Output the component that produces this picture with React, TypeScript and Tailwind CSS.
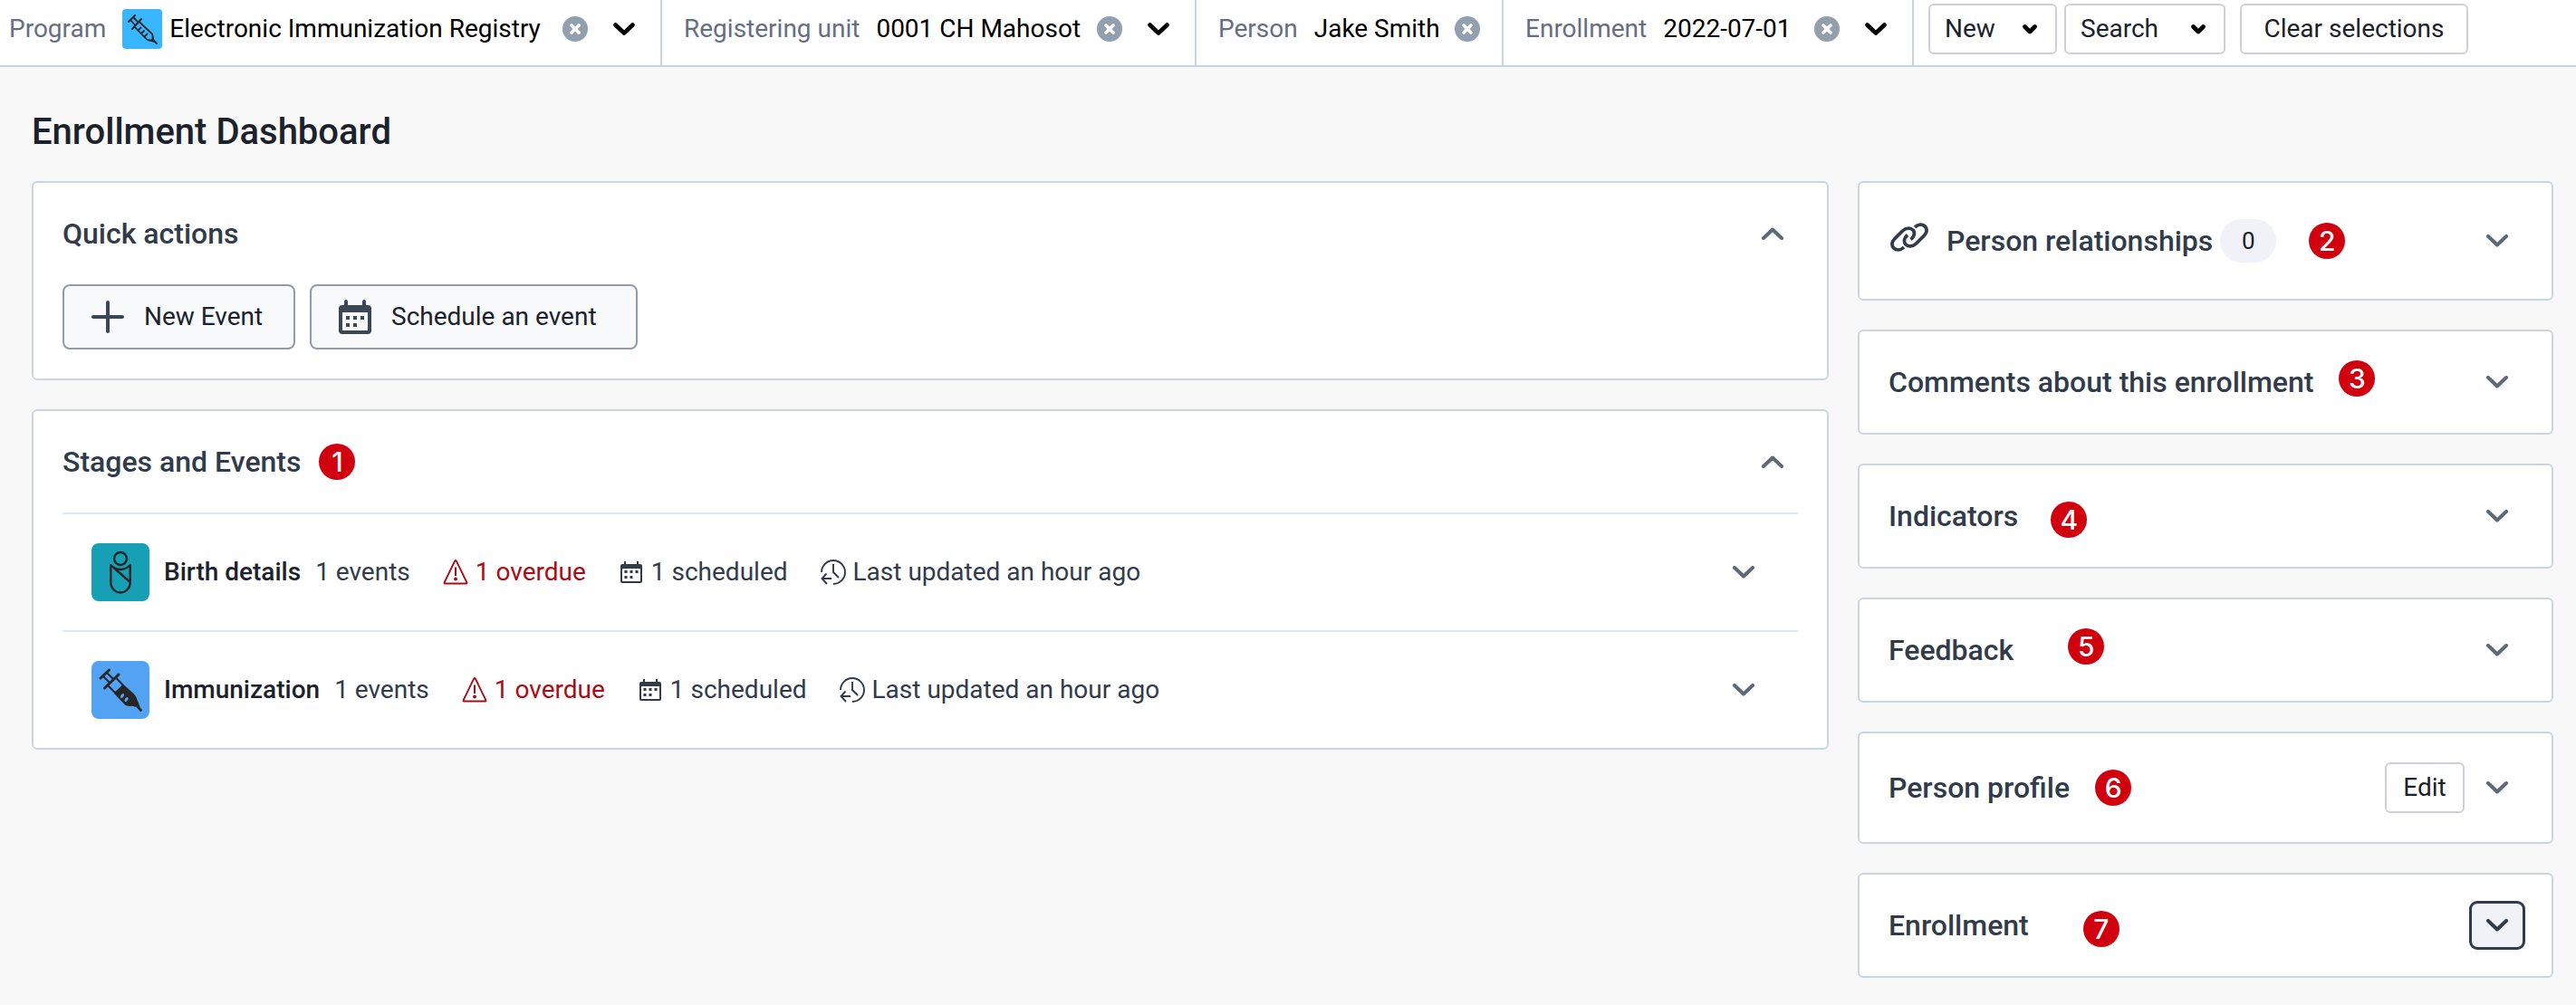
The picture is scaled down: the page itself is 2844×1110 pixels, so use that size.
import type { ReactNode } from "react";

type ChevronProps = { up?: boolean; className?: string };

function Chevron({ up = false, className = "" }: ChevronProps) {
  return (
    <svg viewBox="0 0 24 14" className={`h-[14px] w-6 ${className}`} fill="none" stroke="currentColor" strokeWidth="4" strokeLinecap="round" strokeLinejoin="round" aria-hidden="true">
      <path d={up ? "M2 12 L12 2.5 L22 12" : "M2 2 L12 11.5 L22 2"} />
    </svg>
  );
}

function BoldChevron() {
  return (
    <svg viewBox="0 0 24 14" className="h-[14px] w-6" fill="none" stroke="currentColor" strokeWidth="4.6" strokeLinecap="round" strokeLinejoin="round" aria-hidden="true">
      <path d="M2.5 2.5 L12 11.5 L21.5 2.5" />
    </svg>
  );
}

function SmallChevron() {
  return (
    <svg viewBox="0 0 16 11" className="h-[11px] w-4" fill="none" stroke="#000" strokeWidth="4.6" strokeLinecap="round" strokeLinejoin="round" aria-hidden="true">
      <path d="M2.5 2.5 L8 8 L13.5 2.5" />
    </svg>
  );
}

function SyringeOutline() {
  return (
    <svg viewBox="0 0 44 44" className="size-11 rounded bg-[#38b6ff]" fill="none" stroke="#26282b" strokeWidth="1.8" strokeLinecap="round" strokeLinejoin="round" aria-hidden="true">
      <path d="M7 14 L14 7" strokeWidth="2" />
      <path d="M9 12 L13.5 17 M12 9 L17 14" />
      <path d="M11 22 L21 11" strokeWidth="2" />
      <path d="M13.5 19.5 L27 33.5 Q31 35.5 33 34 Q34.500 31.500 33 27.500 L18.500 14" />
      <path d="M17.500 23.500 L20.500 20.500 M21 27 L24 24 M24.500 30.500 L27.500 27.500" />
      <path d="M30 34.500 L35 36 L33.500 31" />
      <path d="M35 35 L38 38" strokeWidth="2.200" />
    </svg>
  );
}

function SyringeFilled() {
  return (
    <svg viewBox="0 0 64 64" className="size-16 rounded-lg bg-[#52a3f3]" fill="none" stroke="#262626" strokeWidth="2" strokeLinecap="round" strokeLinejoin="round" aria-hidden="true">
      <path d="M10 19 L19.500 10" strokeWidth="3" />
      <path d="M13 17 L20 24 M17 13 L24 20" />
      <path d="M14.500 30 L30 15" strokeWidth="3" />
      <path d="M18.500 27.500 L27 36 M27.500 19 L35 27" />
      <path d="M26 35.500 L35 27 L46 37 Q50 41 49.500 47 Q44 50.500 38 48 Z" fill="#262626" />
      <path d="M46 49 L52.500 50.500 L50 44 Z" fill="#262626" />
      <path d="M51 50.500 L54.500 54.500" strokeWidth="2.800" />
      <ellipse cx="34" cy="38.500" rx="1.600" ry="2.800" transform="rotate(38 34 38.500)" fill="#52a3f3" stroke="none" />
      <ellipse cx="38.500" cy="42.500" rx="1.600" ry="2.800" transform="rotate(38 38.500 42.500)" fill="#52a3f3" stroke="none" />
    </svg>
  );
}

function SwaddledBaby() {
  return (
    <svg viewBox="0 0 64 64" className="size-16 rounded-lg bg-[#169fb5]" fill="none" stroke="#262626" strokeWidth="2.400" strokeLinejoin="round" aria-hidden="true">
      <circle cx="32" cy="17" r="7" />
      <path d="M21.300 24 V43.500 A10.700 11 0 0 0 42.700 43.500 V24 Q38 29 32 29 Q26 29 21.300 24 Z M24 26.500 L42.700 43" />
    </svg>
  );
}

function LinkIcon() {
  return (
    <svg viewBox="0 0 42 32" className="h-8 w-[42px]" fill="none" stroke="#303b4b" strokeWidth="3.800" aria-hidden="true">
      <path d="M15 27 C11 31 6.500 30.500 3.800 28 C1 25.500 1.500 21 4.500 18 L13.500 9 C17.500 5 22.500 5.500 25 8 C27.500 11 26.500 15.500 22.500 18.500" />
      <path d="M27 5 C31 1 35.500 1.500 38.200 4 C41 6.500 40.500 11 37.500 14 L28.500 23 C24.500 27 19.500 26.500 17 24 C14.500 21 15 17 19 13.500" />
    </svg>
  );
}

function PlusIcon() {
  return (
    <svg viewBox="0 0 36 36" className="size-9" stroke="#3b4657" strokeWidth="4" strokeLinecap="round" aria-hidden="true">
      <path d="M18 2 V34 M2 18 H34" />
    </svg>
  );
}

function ScheduleIcon() {
  return (
    <svg viewBox="0 0 36 38" className="h-[38px] w-9" fill="#3b4657" aria-hidden="true">
      <path fillRule="evenodd" d="M6 2 a2 2 0 0 1 4 0 V6 H26 V2 a2 2 0 0 1 4 0 V6 H32 a4 4 0 0 1 4 4 V34 a4 4 0 0 1 -4 4 H4 a4 4 0 0 1 -4 -4 V10 a4 4 0 0 1 4 -4 H6 Z M4 14 V34 H32 V14 Z" />
      <path d="M8 18 h4 v4 h-4 z M16 18 h4 v4 h-4 z M24 18 h4 v4 h-4 z M8 26 h4 v4 h-4 z M16 26 h4 v4 h-4 z" />
    </svg>
  );
}

function WarningIcon() {
  return (
    <svg viewBox="0 0 28 28" className="size-7" fill="none" stroke="currentColor" strokeWidth="1.800" strokeLinejoin="round" aria-hidden="true">
      <path d="M13.200 1.500 Q14 0.500 14.800 1.500 L26.500 25.500 Q26.600 26.500 25.500 26.500 H2.500 Q1.400 26.500 1.500 25.500 Z" />
      <path d="M14 8.500 V18" strokeWidth="2" />
      <circle cx="14" cy="21.500" r="2" fill="currentColor" stroke="none" />
    </svg>
  );
}

function CalendarIcon() {
  return (
    <svg viewBox="0 0 28 28" className="size-7" fill="currentColor" aria-hidden="true">
      <path fillRule="evenodd" d="M6 2 h2 V5 H20 V2 h2 V5 H24 a2 2 0 0 1 2 2 V24 a2 2 0 0 1 -2 2 H4 a2 2 0 0 1 -2 -2 V7 a2 2 0 0 1 2 -2 H6 Z M4 10 V24 H24 V10 Z" />
      <path d="M6.500 12 h3 v3 h-3 z M12.500 12 h3 v3 h-3 z M18.500 12 h3 v3 h-3 z M6.500 18 h3 v3 h-3 z M12.500 18 h3 v3 h-3 z" />
    </svg>
  );
}

function HistoryIcon() {
  return (
    <svg viewBox="0 0 28 28" className="size-7" fill="none" stroke="currentColor" strokeWidth="1.900" aria-hidden="true">
      <path d="M1 14 A13 13 0 1 1 14 27" />
      <path d="M14 5 V14 L20 20" />
      <path d="M12 21 H2 M6.500 15.500 L1.500 21 L7 27" />
    </svg>
  );
}

function ClearButton({ label }: { label: string }) {
  return (
    <button type="button" aria-label={`Clear ${label}`} className="flex size-7 items-center justify-center rounded-full bg-[#929fae]">
      <svg viewBox="0 0 12 12" className="size-3" stroke="#fff" strokeWidth="3.800" strokeLinecap="round" aria-hidden="true">
        <path d="M2 2 L10 10 M10 2 L2 10" />
      </svg>
    </button>
  );
}

type SelectorProps = { label: string; value: string; icon?: ReactNode; menu?: boolean; className: string };

function Selector({ label, value, icon, menu = true, className }: SelectorProps) {
  return (
    <div className={`flex items-center border-r-2 border-[#c9d5e1] pt-1 pb-3 ${menu ? "pr-7" : "pr-6"} ${className}`}>
      <span className="mr-[18px] text-[#646f83]">{label}</span>
      {icon && <span className="mr-2">{icon}</span>}
      <span className="mr-4 flex-1 text-black">{value}</span>
      <ClearButton label={label} />
      {menu && (
        <button type="button" aria-label={`Change ${label}`} className="ml-7 text-black">
          <BoldChevron />
        </button>
      )}
    </div>
  );
}

function Marker({ n, className }: { n: number; className: string }) {
  return (
    <span className={`flex h-12 ${className}`}>
      <span className="flex size-10 items-center justify-center rounded-full bg-[#d1000e] font-['Inter',sans-serif] text-[30px] leading-none font-medium text-white">
        {n}
      </span>
    </span>
  );
}

function ToggleButton({ label, up = false, focused = false }: { label: string; up?: boolean; focused?: boolean }) {
  return (
    <button
      type="button"
      aria-label={`Toggle ${label}`}
      aria-expanded={up}
      className={`flex h-12 w-14 items-center justify-center rounded-md ${focused ? "bg-[#f0f2f7] text-[#303b4b] outline-3 outline-[#303b4b]" : "text-[#5d687b]"}`}
    >
      <Chevron up={up} />
    </button>
  );
}

function Card({ children }: { children: ReactNode }) {
  return <section className="rounded-md border-2 border-[#cad5e0] bg-white">{children}</section>;
}

type HeaderProps = { title: string; marker?: ReactNode; before?: ReactNode; after?: ReactNode; action?: ReactNode; up?: boolean; focused?: boolean; tall?: boolean };

function CardHeader({ title, marker, before, after, action, up, focused, tall = false }: HeaderProps) {
  return (
    <div className={`flex items-center px-8 ${tall ? "py-10" : "py-8"}`}>
      {before}
      <h2 className="text-[32px] leading-10 font-medium text-[#303b4b]">{title}</h2>
      {after}
      {marker}
      <div className="ml-auto flex items-center gap-2">
        {action}
        <ToggleButton label={title} up={up} focused={focused} />
      </div>
    </div>
  );
}

function StageRow({ icon, name }: { icon: ReactNode; name: string }) {
  return (
    <li className="mx-8 flex items-center border-t-2 border-[#e2e8f0] px-8 py-8 text-[#303b4b]">
      {icon}
      <h3 className="ml-4 font-medium text-[#1b222d]">{name}</h3>
      <div className="ml-4 flex items-center gap-9">
        <span>1 events</span>
        <span className="flex items-center gap-2 text-[#ab0b14]">
          <WarningIcon />1 overdue
        </span>
        <span className="flex items-center gap-2">
          <CalendarIcon />1 scheduled
        </span>
        <span className="flex items-center gap-2">
          <HistoryIcon />
          Last updated an hour ago
        </span>
      </div>
      <div className="ml-auto">
        <ToggleButton label={name} />
      </div>
    </li>
  );
}

export default function App() {
  return (
    <div className="min-h-screen bg-[#f8f8f8] font-['Roboto',sans-serif] text-[28px] leading-9 text-[#1b222d]">
      <header className="flex border-b-2 border-[#c9d5e1] bg-white whitespace-nowrap">
        <Selector className="min-w-[731px] pl-[10px]" label="Program" value="Electronic Immunization Registry" icon={<SyringeOutline />} />
        <Selector className="min-w-[590px] pl-6" label="Registering unit" value="0001 CH Mahosot" />
        <Selector className="min-w-[339px] pl-6" label="Person" value="Jake Smith" menu={false} />
        <Selector className="min-w-[453px] pl-6" label="Enrollment" value="2022-07-01" />
        <div className="flex pt-1 pb-3 pl-4">
          <button type="button" className="mr-2 flex h-14 w-[142px] items-center justify-between rounded-md border-2 border-[#cfcfd8] pr-5 pl-4">
            New
            <SmallChevron />
          </button>
          <button type="button" className="mr-4 flex h-14 w-[178px] items-center justify-between rounded-md border-2 border-[#cfcfd8] pr-5 pl-4">
            Search
            <SmallChevron />
          </button>
          <button type="button" className="h-14 w-[252px] rounded-md border-2 border-[#cfcfd8]">
            Clear selections
          </button>
        </div>
      </header>

      <main className="pt-12 pr-[25px] pb-[30px] pl-[35px]">
        <h1 className="mb-[30px] text-[40px] leading-[48px] font-medium">Enrollment Dashboard</h1>
        <div className="grid grid-cols-[minmax(0,1fr)_768px] items-start gap-8">
          <div className="flex flex-col gap-8">
            <Card>
              <CardHeader title="Quick actions" up />
              <div className="flex gap-4 px-8 pb-8">
                <button type="button" className="flex h-[72px] w-[257px] items-center gap-[22px] rounded-lg border-2 border-[#8f9cad] bg-[#f8f9fb] pl-[30px]">
                  <PlusIcon />
                  New Event
                </button>
                <button type="button" className="flex h-[72px] w-[362px] items-center gap-[22px] rounded-lg border-2 border-[#8f9cad] bg-[#f8f9fb] pl-[30px]">
                  <ScheduleIcon />
                  Schedule an event
                </button>
              </div>
            </Card>
            <Card>
              <CardHeader title="Stages and Events" up marker={<Marker n={1} className="ml-5 items-center" />} />
              <ul>
                <StageRow icon={<SwaddledBaby />} name="Birth details" />
                <StageRow icon={<SyringeFilled />} name="Immunization" />
              </ul>
            </Card>
          </div>

          <aside className="flex flex-col gap-8">
            <Card>
              <CardHeader
                title="Person relationships"
                tall
                before={
                  <span className="mr-5 flex h-10 pl-0.5">
                    <LinkIcon />
                  </span>
                }
                after={<span className="ml-2 flex h-12 w-[62px] items-center justify-center rounded-full bg-[#f0f2f7] text-[26px]">0</span>}
                marker={<Marker n={2} className="ml-9 items-center" />}
              />
            </Card>
            <Card>
              <CardHeader title="Comments about this enrollment" marker={<Marker n={3} className="ml-7 items-start" />} />
            </Card>
            <Card>
              <CardHeader title="Indicators" marker={<Marker n={4} className="ml-9 items-end" />} />
            </Card>
            <Card>
              <CardHeader title="Feedback" marker={<Marker n={5} className="ml-15 items-start" />} />
            </Card>
            <Card>
              <CardHeader
                title="Person profile"
                marker={<Marker n={6} className="ml-7 items-center" />}
                action={
                  <button type="button" className="h-14 w-[88px] rounded-md border-2 border-[#cfcfd8]">
                    Edit
                  </button>
                }
              />
            </Card>
            <Card>
              <CardHeader title="Enrollment" focused marker={<Marker n={7} className="ml-15 items-end" />} />
            </Card>
          </aside>
        </div>
      </main>
    </div>
  );
}
